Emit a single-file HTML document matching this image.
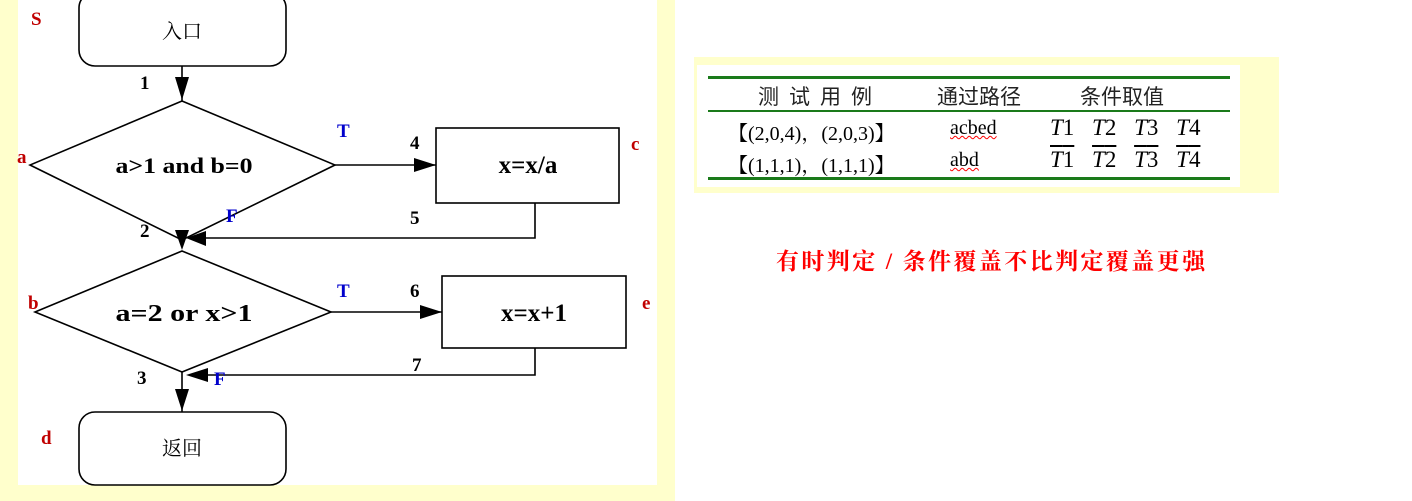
<!DOCTYPE html>
<html><head><meta charset="utf-8"><style>
html,body{margin:0;padding:0;width:1412px;height:501px;overflow:hidden;background:#fff;position:relative;font-family:"Liberation Serif","Noto Serif CJK SC",serif;}
.abs{position:absolute;}
.lbl{position:absolute;font-weight:bold;font-size:19px;font-family:"Liberation Serif",serif;}
.r{color:#c00000}.b{color:#0000cc}.k{color:#000}
</style></head><body>
<div class="abs" style="left:0;top:0;width:675px;height:501px;background:#ffffcc"></div>
<div class="abs" style="left:18px;top:0;width:639px;height:485px;background:#fff"></div>
<svg class="abs" style="left:0;top:0" width="675" height="501">
<g fill="none" stroke="#000" stroke-width="1.6">
<rect x="79" y="-8" width="207" height="74" rx="16"/>
<rect x="79" y="412" width="207" height="73" rx="16"/>
<line x1="182" y1="66" x2="182" y2="101"/>
<polygon points="182,101 335,165 182,240 30,165"/>
<polygon points="182,251 331,312 182,372 35,312"/>
<line x1="335" y1="165" x2="436" y2="165"/>
<rect x="436" y="128" width="183" height="75"/>
<polyline points="535,203 535,238 190,238"/>
<line x1="331" y1="312" x2="442" y2="312"/>
<rect x="442" y="276" width="184" height="72"/>
<polyline points="535,348 535,375 190,375"/>
<line x1="182" y1="372" x2="182" y2="412"/>
</g>
<g fill="#000">
<polygon points="175,77 189,77 182,100"/>
<polygon points="414,158 414,172 436,165"/>
<polygon points="206,231 206,246 186,238"/>
<polygon points="175,230 189,230 182,250"/>
<polygon points="420,305 420,319 442,312"/>
<polygon points="208,368 208,382 186,375"/>
<polygon points="175,389 189,389 182,411"/>
</g>
<g font-family="Liberation Serif,Noto Serif CJK SC,serif" text-anchor="middle">
<text x="182" y="38" font-size="20">入口</text>
<text x="182" y="455" font-size="20">返回</text>
<text x="184" y="173" font-size="22" font-weight="bold" textLength="137" lengthAdjust="spacingAndGlyphs">a&gt;1 and b=0</text>
<text x="184" y="321" font-size="24" font-weight="bold" textLength="137" lengthAdjust="spacingAndGlyphs">a=2 or x&gt;1</text>
<text x="528" y="173" font-size="25" font-weight="bold">x=x/a</text>
<text x="534" y="321" font-size="25" font-weight="bold">x=x+1</text>
</g>
</svg>
<span class="lbl r" style="left:31px;top:9px">S</span>
<span class="lbl k" style="left:140px;top:73px">1</span>
<span class="lbl b" style="left:337px;top:121px">T</span>
<span class="lbl k" style="left:410px;top:133px">4</span>
<span class="lbl r" style="left:631px;top:134px">c</span>
<span class="lbl r" style="left:17px;top:147px">a</span>
<span class="lbl b" style="left:226px;top:206px">F</span>
<span class="lbl k" style="left:410px;top:208px">5</span>
<span class="lbl k" style="left:140px;top:221px">2</span>
<span class="lbl r" style="left:28px;top:293px">b</span>
<span class="lbl b" style="left:337px;top:281px">T</span>
<span class="lbl k" style="left:410px;top:281px">6</span>
<span class="lbl r" style="left:642px;top:293px">e</span>
<span class="lbl k" style="left:412px;top:355px">7</span>
<span class="lbl k" style="left:137px;top:368px">3</span>
<span class="lbl b" style="left:214px;top:369px">F</span>
<span class="lbl r" style="left:41px;top:428px">d</span>

<div class="abs" style="left:694px;top:57px;width:585px;height:136px;background:#ffffcc"></div>
<div class="abs" style="left:697px;top:65px;width:543px;height:122px;background:#fff"></div>
<div class="abs" style="left:708px;top:76px;width:522px;height:3px;background:#1a7a1a"></div>
<div class="abs" style="left:708px;top:110px;width:522px;height:2px;background:#1a7a1a"></div>
<div class="abs" style="left:708px;top:177px;width:522px;height:3px;background:#1a7a1a"></div>
<div class="abs" style="left:708px;top:81px;width:522px;font-family:'Liberation Sans','Noto Sans CJK SC',sans-serif;font-size:21px;color:#222">
<span class="abs" style="left:50px;letter-spacing:10px;white-space:nowrap">测试用例</span>
<span class="abs" style="left:229px;white-space:nowrap">通过路径</span>
<span class="abs" style="left:372px;white-space:nowrap">条件取值</span>
</div>
<div class="abs" style="left:728px;top:117px;font-size:20px;white-space:nowrap">【(2,0,4)，(2,0,3)】</div>
<div class="abs" style="left:728px;top:149px;font-size:20px;white-space:nowrap">【(1,1,1)，(1,1,1)】</div>
<div class="abs" style="left:950px;top:117px;font-size:20px;text-decoration:underline wavy red;text-decoration-thickness:1px">acbed</div>
<div class="abs" style="left:950px;top:149px;font-size:20px;text-decoration:underline wavy red;text-decoration-thickness:1px">abd</div>
<div class="abs" style="left:1050px;top:115px;font-size:23px;white-space:nowrap;word-spacing:12px"><i>T</i>1 <i>T</i>2 <i>T</i>3 <i>T</i>4</div>
<div class="abs" style="left:1050px;top:147px;font-size:23px;white-space:nowrap;word-spacing:12px"><span style="text-decoration:overline"><i>T</i>1</span> <span style="text-decoration:overline"><i>T</i>2</span> <span style="text-decoration:overline"><i>T</i>3</span> <span style="text-decoration:overline"><i>T</i>4</span></div>

<div class="abs" style="left:776px;top:243px;font-family:'Liberation Serif','Noto Serif CJK SC',serif;font-weight:bold;font-size:23px;color:#ff0000;white-space:nowrap;letter-spacing:2.4px">有时判定 / 条件覆盖不比判定覆盖更强</div>
</body></html>
